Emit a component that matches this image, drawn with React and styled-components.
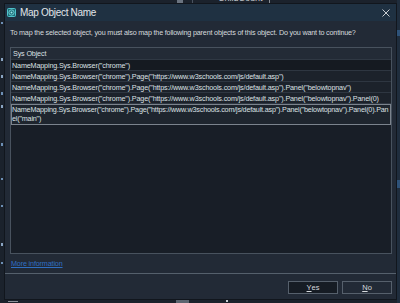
import React from 'react';
import styled, { createGlobalStyle } from 'styled-components';

const GlobalStyle = createGlobalStyle`
  html, body {
    margin: 0;
    padding: 0;
    background: #1a2029;
  }
  body {
    font-family: "Liberation Sans", Arial, sans-serif;
  }
`;

const rows = [
  'NameMapping.Sys.Browser("chrome")',
  'NameMapping.Sys.Browser("chrome").Page("https://www.w3schools.com/js/default.asp")',
  'NameMapping.Sys.Browser("chrome").Page("https://www.w3schools.com/js/default.asp").Panel("belowtopnav")',
  'NameMapping.Sys.Browser("chrome").Page("https://www.w3schools.com/js/default.asp").Panel("belowtopnav").Panel(0)',
];

const lastRow = [
  'NameMapping.Sys.Browser("chrome").Page("https://www.w3schools.com/js/default.asp").Panel("belowtopnav").Panel(0).Pan',
  'el("main")',
];

// 다이얼로그 뒤에 보이는 배경 앱 조각들
const fragments = [
  { x: 177, y: 0, w: 6, h: 3, c: '#6b7480' },
  { x: 192, y: 0, w: 1, h: 3, c: '#4a5360' },
  { x: 269, y: 0, w: 1, h: 3, c: '#8a8f96' },
  { x: 176, y: 300, w: 13, h: 3, c: '#5c6570' },
  { x: 226, y: 300, w: 2, h: 2, c: '#c9ced4' },
  { x: 397, y: 0, w: 3, h: 303, c: '#1f2d3d' },
  { x: 397, y: 30, w: 3, h: 6, c: '#2e5279' },
  { x: 397, y: 180, w: 3, h: 8, c: '#2e5279' },
  { x: 1, y: 22, w: 2, h: 2, c: '#6d8fb5' },
  { x: 1, y: 58, w: 2, h: 3, c: '#8aa4c2' },
  { x: 1, y: 75, w: 2, h: 3, c: '#8aa4c2' },
  { x: 1, y: 92, w: 2, h: 3, c: '#6d8fb5' },
  { x: 1, y: 105, w: 2, h: 3, c: '#8aa4c2' },
  { x: 1, y: 143, w: 2, h: 3, c: '#6d8fb5' },
  { x: 1, y: 178, w: 2, h: 2, c: '#6d8fb5' },
  { x: 1, y: 205, w: 2, h: 2, c: '#6d8fb5' },
  { x: 1, y: 243, w: 2, h: 3, c: '#8aa4c2' },
  { x: 1, y: 262, w: 2, h: 2, c: '#6d8fb5' },
  { x: 8, y: 301, w: 10, h: 1, c: '#8a9099' },
];

const App = () => (
  <>
    <GlobalStyle />
    <Desktop>
      {fragments.map((f, i) => (
        <Fragment
          key={i}
          style={{ left: f.x, top: f.y, width: f.w, height: f.h, background: f.c }}
        />
      ))}
      <BackLabel>ChildCount</BackLabel>

      <Dialog>
        <TitleBar>
          <AppIcon viewBox="0 0 9 9">
            <rect x="0.5" y="0.5" width="8" height="8" rx="1" fill="#1d6f78" stroke="#4fc2cb" />
            <circle cx="4.5" cy="4.5" r="2.6" fill="none" stroke="#7fe0e6" strokeWidth="0.8" />
            <circle cx="4.5" cy="4.5" r="1" fill="#9ae8ec" />
          </AppIcon>
          <Title>Map Object Name</Title>
          <CloseIcon viewBox="0 0 8 8">
            <path d="M0.5 0.5 L7.5 7.5 M7.5 0.5 L0.5 7.5" stroke="#c9cdd2" strokeWidth="1" />
          </CloseIcon>
        </TitleBar>

        <Body>
          <Message>
            To map the selected object, you must also map the following parent objects of this object. Do you want to continue?
          </Message>

          <Table>
            <HeaderRow>Sys Object</HeaderRow>
            {rows.map((r, i) => (
              <Row key={r} dark={i === 0}>{r}</Row>
            ))}
            <Row selected>
              {lastRow[0]}
              <br />
              {lastRow[1]}
            </Row>
          </Table>

          <MoreLink href="#">More information</MoreLink>
        </Body>

        <Footer>
          <Button primary>
            <u>Y</u>es
          </Button>
          <Button>
            <u>N</u>o
          </Button>
        </Footer>
      </Dialog>
    </Desktop>
  </>
);

export default App;

const Desktop = styled.div`
  position: relative;
  width: 400px;
  height: 303px;
  overflow: hidden;
  background: #1b222c;
`;

const Fragment = styled.div`
  position: absolute;
`;

const BackLabel = styled.span`
  position: absolute;
  left: 218px;
  top: -7px;
  font-size: 9px;
  color: #c4c9cf;
`;

const Dialog = styled.div`
  position: absolute;
  left: 4px;
  top: 3px;
  width: 393px;
  height: 297px;
  box-sizing: border-box;
  border: 1px solid #11161d;
  background: #222a36;
  display: flex;
  flex-direction: column;
`;

const TitleBar = styled.div`
  height: 17px;
  flex: none;
  display: flex;
  align-items: center;
  gap: 4px;
  padding: 0 6px 0 2px;
  background: #1f3142;
`;

const AppIcon = styled.svg`
  width: 9px;
  height: 9px;
  flex: none;
`;

const Title = styled.span`
  flex: 1;
  font-size: 10px;
  letter-spacing: -0.3px;
  color: #e2e6ea;
`;

const CloseIcon = styled.svg`
  width: 8px;
  height: 8px;
  flex: none;
`;

const Body = styled.div`
  flex: 1;
  display: flex;
  flex-direction: column;
  padding: 7px 4px 4px 5px;
  min-height: 0;
`;

const Message = styled.div`
  font-size: 7.2px;
  line-height: 10px;
  letter-spacing: -0.18px;
  color: #d6dade;
  white-space: nowrap;
`;

const Table = styled.div`
  flex: 1;
  margin-top: 9px;
  border: 1px solid #48525e;
  background: #181e27;
  display: flex;
  flex-direction: column;
  font-size: 7.2px;
  letter-spacing: -0.15px;
  color: #dce0e4;
`;

const HeaderRow = styled.div`
  height: 12px;
  line-height: 12px;
  padding-left: 2px;
  background: #232b36;
  border-bottom: 1px solid #2f3843;
  box-sizing: border-box;
`;

const Row = styled.div`
  line-height: 9px;
  padding: 1px 1px 0;
  white-space: nowrap;
  background: ${({ dark }) => (dark ? '#151a21' : '#1c222b')};
  border-bottom: 1px solid #2e3641;
  ${({ selected }) =>
    selected &&
    `
    border: 1px solid #7b838d;
    padding: 0 1px 1px 0;
    letter-spacing: -0.19px;
    background: #1e252e;
  `}
`;

const MoreLink = styled.a`
  margin-top: 5px;
  padding-left: 1px;
  font-size: 7.2px;
  line-height: 10px;
  letter-spacing: -0.15px;
  color: #2f6fc2;
  text-decoration: underline;
  align-self: flex-start;
`;

const Footer = styled.div`
  height: 26px;
  flex: none;
  box-sizing: border-box;
  border-top: 1px solid #55606c;
  display: flex;
  justify-content: flex-end;
  gap: 4px;
  padding: 7px 4px 0 0;
  background: #222a36;
`;

const Button = styled.div`
  width: 50px;
  height: 13px;
  box-sizing: border-box;
  border: 1px solid #56606c;
  background: ${({ primary }) => (primary ? '#161c24' : '#222a36')};
  display: flex;
  align-items: center;
  justify-content: center;
  font-size: 7.5px;
  color: #d6dade;

  u {
    text-decoration-thickness: 1px;
  }
`;
